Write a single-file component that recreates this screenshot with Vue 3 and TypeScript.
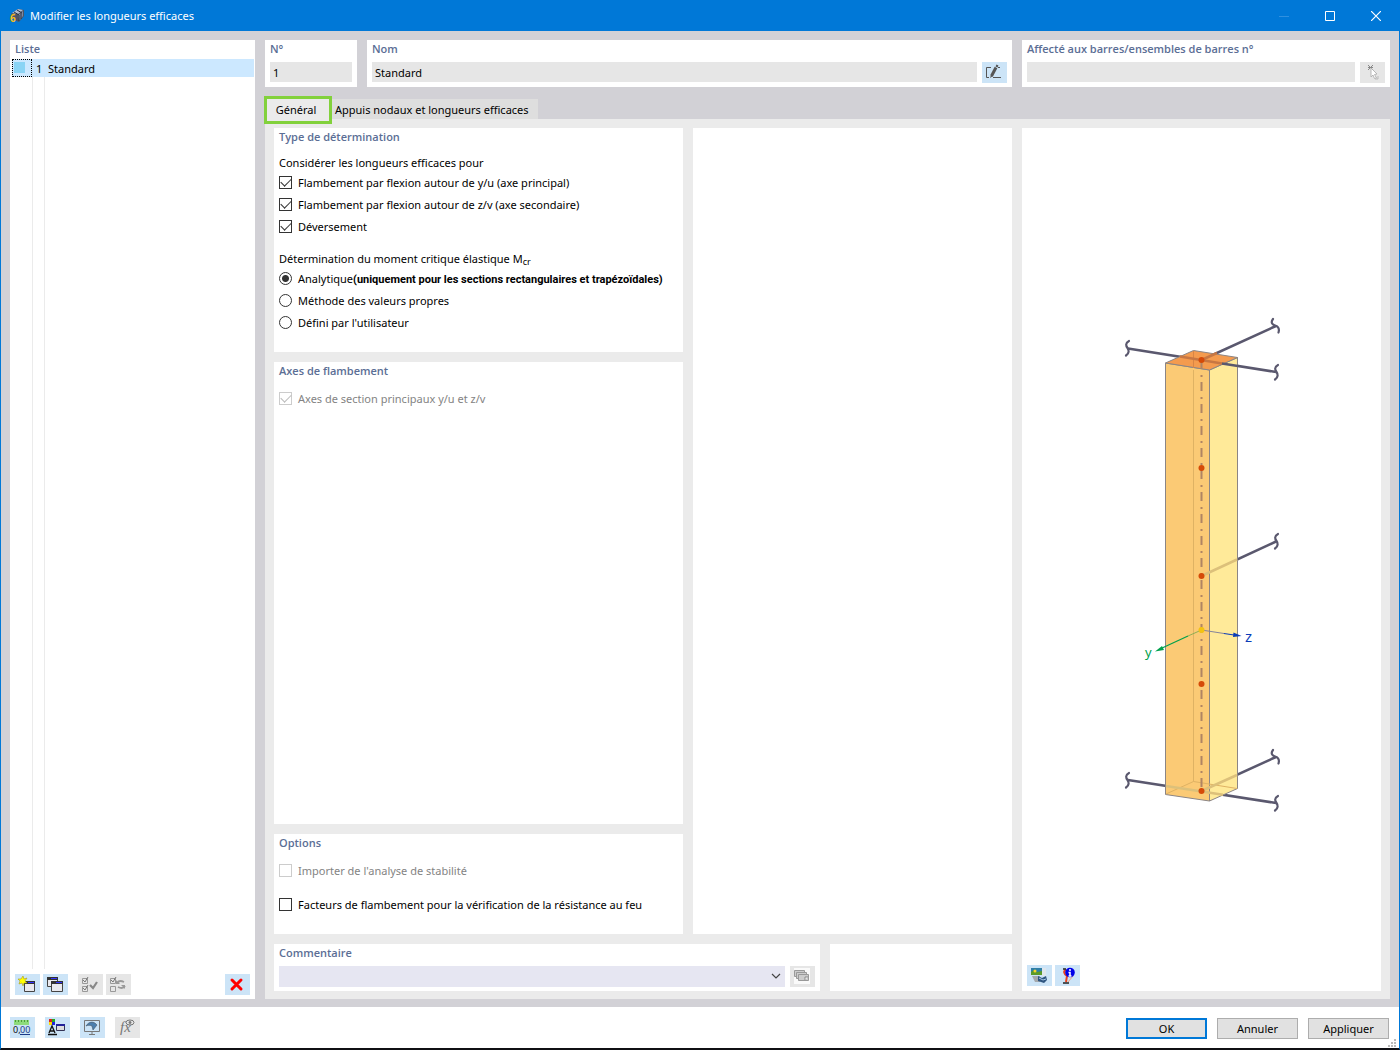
<script setup lang="ts">
import { ref } from 'vue'

interface Option {
  id: string
  label: string
  note?: string
}

const buckling: Option[] = [
  { id: 'yu', label: 'Flambement par flexion autour de y/u (axe principal)' },
  { id: 'zv', label: 'Flambement par flexion autour de z/v (axe secondaire)' },
  { id: 'lt', label: 'Déversement' },
]
const methods: Option[] = [
  { id: 'analytic', label: 'Analytique', note: '(uniquement pour les sections rectangulaires et trapézoïdales)' },
  { id: 'eigen', label: 'Méthode des valeurs propres' },
  { id: 'user', label: "Défini par l'utilisateur" },
]

const selectedBuckling = ref<string[]>(['yu', 'zv', 'lt'])
const method = ref('analytic')
const fire = ref(false)
const name = ref('Standard')
const nodes: number[] = [360, 468, 576, 684, 791]
</script>

<template>
  <div class="window">
    <header class="titlebar">
      <svg class="app-icon" width="16" height="20" viewBox="0 0 16 20" aria-hidden="true">
        <g transform="translate(0 2)">
          <path d="M2 6 9 1l6 1v6l-5 6-5-2z" fill="#4c5563" />
          <path d="M3 5l6-4 5 1-5 4z" fill="#aebbd0" />
          <path d="M9 7l5-4v5l-4 5z" fill="#7d8aa5" />
          <path d="M5 4l5 3M8 2l5 3M10 7v6M12 5v6" stroke="#2b3140" fill="none" />
        </g>
        <text x="1" y="16" font-size="10" font-weight="700" fill="#f5bd1c">6</text>
      </svg>
      <h1>Modifier les longueurs efficaces</h1>
      <div class="win-buttons">
        <button type="button" aria-label="Réduire" disabled>
          <svg width="10" height="10"><path d="M0 5.500h10" stroke="#2f90e0" /></svg>
        </button>
        <button type="button" aria-label="Agrandir">
          <svg width="10" height="10"><path d="M.5.500h9v9h-9z" stroke="#fff" fill="none" /></svg>
        </button>
        <button type="button" aria-label="Fermer">
          <svg width="10" height="10"><path d="M0 0l10 10M10 0L0 10" stroke="#fff" stroke-width="1.200" /></svg>
        </button>
      </div>
    </header>

    <div class="workspace">
      <aside class="card list">
        <h2>Liste</h2>
        <ul class="rows">
          <li class="row">
            <span class="swatch-cell"><span class="swatch"></span></span>
            <span class="row-no">1</span>
            <span class="row-name">Standard</span>
          </li>
        </ul>
        <div class="tools list-tools">
          <button class="tool" type="button" aria-label="Nouveau">
            <svg width="17" height="17" viewBox="0 0 17 17">
              <path d="M6.500 6.500h10v9h-10z" fill="#e9e9ee" stroke="#444" /><path d="M6 5h11v3H6z" fill="#333" /><path d="M10 6h6v1h-6z" fill="#33f" />
              <path d="M5 0l1 3 3-1-2 3 2 2-3 0-1 3-1-3-3 1 1-3-2-2 3 0z" fill="#ff0" stroke="#a89b20" stroke-width=".6" />
            </svg>
          </button>
          <button class="tool" type="button" aria-label="Copier">
            <svg width="17" height="17" viewBox="0 0 17 17">
              <path d="M1.500 1.500h10v9h-10z" fill="#e9e9ee" stroke="#444" /><path d="M1 1h11v3H1z" fill="#333" /><path d="M5 2h6v1H5z" fill="#33f" />
              <path d="M5.500 6.500h11v9h-11z" fill="#e9e9ee" stroke="#444" /><path d="M5 5h12v3H5z" fill="#333" /><path d="M10 6h6v1h-6z" fill="#33f" />
            </svg>
          </button>
          <button class="tool off spaced" type="button" aria-label="Tout sélectionner" disabled>
            <svg width="17" height="17" viewBox="0 0 17 17" fill="none" stroke="#999">
              <path d="M1.500 2.500h5v5h-5zM1.500 10.500h5v5h-5z" /><path d="M2 4l2 2 3-5M2 12l2 2 3-5" stroke="#777" /><path d="M9 9l3 3 4-6" stroke-width="2.200" stroke="#888" />
            </svg>
          </button>
          <button class="tool off" type="button" aria-label="Inverser la sélection" disabled>
            <svg width="17" height="17" viewBox="0 0 17 17" fill="none" stroke="#999">
              <path d="M1.500 2.500h5v5h-5zM1.500 10.500h5v5h-5z" /><path d="M2 4l2 2 3-5" stroke="#777" /><path d="M8 7c2-3 5-2 7-1M16 10c-2 3-5 2-7 1" stroke-width="1.800" /><path d="M7 4v4h4zM16 13V9h-4z" fill="#999" stroke="none" />
            </svg>
          </button>
          <button class="tool push" type="button" aria-label="Supprimer">
            <svg width="17" height="17" viewBox="0 0 17 17"><path d="M4 4l9 9M13 4l-9 9" stroke="#f00" stroke-width="3" stroke-linecap="round" /></svg>
          </button>
        </div>
      </aside>

      <main class="main">
        <div class="head">
          <section class="card field">
            <label for="no">N°</label>
            <div class="field-row"><input id="no" class="text" type="text" value="1" readonly /></div>
          </section>
          <section class="card field">
            <label for="name">Nom</label>
            <div class="field-row">
              <input id="name" v-model="name" class="text" type="text" />
              <button class="tool" type="button" aria-label="Modifier le nom">
                <svg width="17" height="17" viewBox="0 0 17 17" fill="none">
                  <path d="M6 3.500H1.500v10H4M13 3.500h2M8 13.500h8" stroke="#555" /><path d="M6.500 12l4.500-8.500" stroke="#555" stroke-width="3" /><path d="M5 14l1-3 2 1z" fill="#555" /><path d="M11 1.500l2 1" stroke="#555" stroke-width="2" />
                </svg>
              </button>
            </div>
          </section>
          <section class="card field">
            <label for="members">Affecté aux barres/ensembles de barres n°</label>
            <div class="field-row">
              <input id="members" class="text" type="text" readonly />
              <button class="tool off" type="button" aria-label="Sélectionner" disabled>
                <svg width="17" height="17" viewBox="0 0 17 17"><path d="M5 1l5 5M10 1L5 6M5 3.500h5" stroke="#888" /><path d="M8 4l6 6-2.500.5 2 3.500-2 .5-1.500-3.500L8 13z" fill="#fff" stroke="#aaa" stroke-width=".8" /><path d="M12 15h3v-3" stroke="#bbb" fill="none" /></svg>
              </button>
            </div>
          </section>
        </div>

        <div class="tabs" role="tablist">
          <button class="tab active" type="button" role="tab" aria-selected="true">Général</button>
          <button class="tab" type="button" role="tab" aria-selected="false">Appuis nodaux et longueurs efficaces</button>
        </div>

        <div class="pane">
          <div class="left">
            <div class="upper">
              <div class="stack">
                <section class="card type">
                  <h2>Type de détermination</h2>
                  <p class="lead">Considérer les longueurs efficaces pour</p>
                  <label v-for="o in buckling" :key="o.id" class="opt">
                    <input v-model="selectedBuckling" type="checkbox" :value="o.id" />
                    <span>{{ o.label }}</span>
                  </label>
                  <p class="lead second">Détermination du moment critique élastique M<span class="sub">cr</span></p>
                  <label v-for="o in methods" :key="o.id" class="opt">
                    <input v-model="method" type="radio" name="method" :value="o.id" />
                    <span>{{ o.label }}<b v-if="o.note">{{ o.note }}</b></span>
                  </label>
                </section>
                <section class="card axes">
                  <h2>Axes de flambement</h2>
                  <label class="opt first disabled"><input type="checkbox" checked disabled /><span>Axes de section principaux y/u et z/v</span></label>
                </section>
                <section class="card options">
                  <h2>Options</h2>
                  <label class="opt first disabled"><input type="checkbox" disabled /><span>Importer de l'analyse de stabilité</span></label>
                  <label class="opt apart"><input v-model="fire" type="checkbox" /><span>Facteurs de flambement pour la vérification de la résistance au feu</span></label>
                </section>
              </div>
              <section class="card"></section>
            </div>
            <div class="lower">
              <section class="card field">
                <label for="comment">Commentaire</label>
                <div class="field-row">
                  <div class="combo">
                    <select id="comment"><option value=""></option></select>
                    <svg class="chevron" width="10" height="6" viewBox="0 0 10 6"><path d="M1 1l4 4 4-4" fill="none" stroke="#444" stroke-width="1.200" /></svg>
                  </div>
                  <button class="tool off" type="button" aria-label="Commentaires enregistrés" disabled>
                    <svg width="17" height="17" viewBox="0 0 17 17"><path d="M1 0h16v16H1z" fill="#fafafa" /><g fill="#ccc" stroke="#999"><path d="M1.500 2.500h10v6h-10z" /><path d="M3.500 4.500h10v6h-10z" /><path d="M5.500 6.500h10v6h-10z" /></g><path d="M12 12V9h3" stroke="#888" fill="#fff" /></svg>
                  </button>
                </div>
              </section>
              <section class="card"></section>
            </div>
          </div>

          <section class="card preview">
            <div class="scene">
              <svg width="159" height="543" viewBox="1122 275 159 543" role="img" aria-label="Barre avec axes y et z">
                <g stroke="#5a586e" stroke-width="2.500" fill="none">
                  <path d="M1128 348.500L1276 372M1201.500 360L1276 326M1201.500 576L1276 541.500M1128 780L1276 803M1201.500 791L1276 757" />
                  <g stroke-width="2.200" stroke-linecap="round">
                    <path d="M1129 341c-4 2-3 5-1.500 7s2 5-1.500 7.500" />
                    <path d="M1278 365c-4 2-3 5-1.500 7s2 5-1.500 7.500" />
                    <path d="M1278 534c-4 2-3 5-1.500 7s2 5-1.500 7.500" />
                    <path d="M1273 319c-3 4 0 6 2 6.500s5 2 3.500 7" />
                    <path d="M1129 773c-4 2-3 5-1.500 7s2 5-1.500 7.500" />
                    <path d="M1278 796c-4 2-3 5-1.500 7s2 5-1.500 7.500" />
                    <path d="M1273 750c-3 4 0 6 2 6.500s5 2 3.500 7" />
                  </g>
                </g>
                <g stroke="#8b8585" stroke-linejoin="round">
                  <path d="M1165.500 363L1209.500 370V801L1165.500 794.500z" fill="#fbca75" />
                  <path d="M1209.500 370L1237.500 357.500V788.500L1209.500 801z" fill="#ffea99" />
                  <path d="M1165.500 363L1193.500 350.500L1237.500 357.500L1209.500 370z" fill="#f49b4e" />
                </g>
                <g fill="none" stroke="#dfb263">
                  <path d="M1193.500 370V781.500L1166 794M1193.500 781.500L1237 788.500" />
                  <path d="M1193.500 351V368" stroke="#d98545" />
                  <path d="M1201.500 576L1237 559.500M1201.500 791L1237 775M1166 786L1223 794.800" stroke="#dcc07a" stroke-width="2.500" />
                  <path d="M1180 356.600L1222 363.400M1201.500 360L1217 353" stroke="#c77743" stroke-width="2.500" />
                  <path d="M1222 363.400L1238 366" stroke="#5a586e" stroke-width="2.500" />
                  <path d="M1201.500 360V791" stroke="#b08463" stroke-width="2" stroke-dasharray="9 6 2 5" />
                </g>
                <circle v-for="y in nodes" :key="y" cx="1201.500" :cy="y" r="3" fill="#d54a08" />
                <path d="M1201.500 630L1188 636" stroke="#8fae54" /><path d="M1188 636L1161 648.500" stroke="#00a04c" stroke-width="1.200" />
                <path d="M1155 651.500l7-5.500 2 4z" fill="#00a04c" />
                <path d="M1201.500 630L1224 633.500" stroke="#85849b" /><path d="M1224 633.500L1234 635" stroke="#0a3cb8" stroke-width="1.200" />
                <path d="M1241.500 636l-8-3.500-.5 4.500z" fill="#0a3cb8" />
                <circle cx="1201.500" cy="630" r="3" fill="#f3c312" />
                <text x="1145" y="657" font-size="13" fill="#00a04c">y</text>
                <text x="1245" y="642" font-size="15" fill="#0a3cb8">z</text>
              </svg>
            </div>
            <div class="tools">
              <button class="tool" type="button" aria-label="Enregistrer l'image">
                <svg width="17" height="17" viewBox="0 0 17 17"><path d="M1 1h11v7H1z" fill="#2f7fa8" /><path d="M1 5l3-2 3 2 5-1v4H1z" fill="#5a9a28" /><circle cx="5" cy="4" r="1.500" fill="#f7d42c" /><path d="M12 1h4v8h-4z" fill="#dfe6ec" /><path d="M2 9h8v6H5z" fill="#a4a8ac" /><path d="M8 9l4 2 4-2 1 4-3 3-6-2z" fill="#2e5580" /><path d="M9 11l4 2 3-1" stroke="#a9c8ea" fill="none" /></svg>
              </button>
              <button class="tool" type="button" aria-label="Informations">
                <svg width="17" height="17" viewBox="0 0 17 17"><path d="M8 3c-3 1-2 4 1 6l-1 6" stroke="#e8401c" stroke-width="2" fill="none" /><path d="M15 9l-5 6" stroke="#e8a080" /><path d="M5 16h6M5 2h3" stroke="#222" stroke-width="1.500" /><circle cx="12" cy="5.500" r="4.800" fill="#0000e8" /><path d="M12 2v2M10.500 5.500H12V9M10.500 9h3" stroke="#fff" stroke-width="1.500" fill="none" /></svg>
              </button>
            </div>
          </section>
        </div>
      </main>
    </div>

    <footer class="footer">
      <div class="footer-tools">
        <button class="tool" type="button" aria-label="Unités">
          <svg width="19" height="17" viewBox="0 0 19 17"><path d="M2 1h15v5H2z" fill="#8edb7c" /><path d="M3.500 1v2M6.500 1v2M9.500 1v2M12.500 1v2M15.500 1v2" stroke="#4a9a3a" /><text x="1" y="14" font-size="9" fill="#111">0,</text><text x="8" y="14" font-size="9" fill="#1c3a88">00</text><path d="M8 15.500h10" stroke="#1c3a88" /></svg>
        </button>
        <button class="tool" type="button" aria-label="Affichage">
          <svg width="17" height="17" viewBox="0 0 17 17"><path d="M1 0h3v3H1z" fill="#d22" /><path d="M4 0h3v3H4z" fill="#2a2" /><path d="M1 3h3v3H1z" fill="#fd0" /><path d="M4 3h3v3H4z" fill="#22d" /><path d="M1 14l3-7 3 7M2 12h4M0 15.500h9" stroke="#111" stroke-width="1.300" fill="none" /><path d="M8.500 5.500h8v6h-8z" fill="#ddd" stroke="#335" /><path d="M8 5h9v2H8z" fill="#229" /></svg>
        </button>
        <button class="tool" type="button" aria-label="Vue">
          <svg width="17" height="17" viewBox="0 0 17 17"><path d="M1.500 1.500h15v11h-15zM9 13v2M6 15.500h6" stroke="#777" fill="none" /><path d="M3 7c3-5 8-5 11-1l-4 5-1-4c-2-1-4-1-6 0z" fill="#4c7fae" stroke="#456" stroke-width=".6" /></svg>
        </button>
        <button class="tool off" type="button" aria-label="Formule" disabled>
          <svg width="17" height="17" viewBox="0 0 17 17" fill="none" stroke="#777"><text class="fx" x="2" y="13" font-size="15" fill="#777" stroke="none">fx</text><ellipse cx="12" cy="3.500" rx="4" ry="2.500" /><circle cx="12" cy="3.500" r="1" fill="#777" /></svg>
        </button>
      </div>
      <div class="actions">
        <button class="action primary" type="button">OK</button>
        <button class="action" type="button">Annuler</button>
        <button class="action" type="button">Appliquer</button>
      </div>
      <svg class="grip" width="8" height="8" fill="#bbb" aria-hidden="true"><path d="M6 0h2v2H6zM3 3h2v2H3zM6 3h2v2H6zM0 6h2v2H0zM3 6h2v2H3zM6 6h2v2H6z" /></svg>
    </footer>
  </div>
</template>

<style>
body {
  margin: 0;
}
</style>

<style scoped>
.window,
.window * {
  box-sizing: border-box;
}
.window {
  display: flex;
  flex-direction: column;
  min-height: 100vh;
  border: 1px solid #0078d7;
  border-top: 0;
  border-bottom: 2px solid #101014;
  background: #fff;
  color: #000;
  font-family: "Noto Sans", "Open Sans", sans-serif;
  font-size: 11px;
  line-height: 16px;
}
button,
input,
select {
  font: inherit;
  color: inherit;
  margin: 0;
  padding: 0;
  border: 0;
  border-radius: 0;
}
h1,
h2,
p,
ul {
  margin: 0;
  padding: 0;
}
.titlebar {
  display: flex;
  align-items: center;
  height: 31px;
  padding-left: 8px;
  background: #0078d7;
  color: #fff;
}
.titlebar h1 {
  flex: 1;
  padding-left: 5px;
  font-size: 11px;
  font-weight: 400;
}
.win-buttons {
  display: flex;
}
.win-buttons button {
  display: flex;
  align-items: center;
  justify-content: center;
  width: 46px;
  height: 31px;
  background: none;
}
.workspace {
  display: flex;
  flex: 1;
  gap: 10px;
  padding: 9px 9px 8px;
  background: #d2d1d6;
}
.card {
  min-width: 0;
  background: #fff;
}
h2,
.field label {
  display: block;
  height: 19px;
  padding-left: 5px;
  color: #5b6e95;
  font-family: "Open Sans", "Noto Sans", sans-serif;
  font-size: 11px;
  font-weight: 600;
  line-height: 18px;
}
.list {
  display: flex;
  flex-direction: column;
  width: 245px;
}
.rows {
  flex: 1;
  margin: 0 1px 5px 2px;
  list-style: none;
  background:
    linear-gradient(#ebebeb, #ebebeb) 20px 0 / 1px 100% no-repeat,
    linear-gradient(#ebebeb, #ebebeb) 32px 0 / 1px 100% no-repeat;
}
.row {
  display: flex;
  height: 18px;
  line-height: 19px;
  background: #cce8ff;
}
.swatch-cell {
  width: 20px;
  padding: 2px 1px;
  border: 1px dotted #000;
}
.swatch {
  display: block;
  width: 11px;
  height: 11px;
  background: #8ad4f5;
}
.row-no {
  width: 16px;
  padding-left: 4px;
}
.tools {
  display: flex;
  gap: 3px;
  padding: 0 5px 5px;
}
.list-tools {
  padding-bottom: 4px;
}
.tool {
  display: flex;
  align-items: flex-start;
  justify-content: center;
  flex: none;
  width: 25px;
  height: 21px;
  padding: 2px 2px 0 0;
  background: #cce4f7;
}
.tool.off {
  background: #e6e6e6;
}
.spaced {
  margin-left: 7px;
}
.push {
  margin-left: auto;
}
.main {
  display: flex;
  flex-direction: column;
  flex: 1;
  min-width: 0;
}
.head {
  display: grid;
  grid-template-columns: 92px 1fr 368px;
  gap: 10px;
}
.field {
  height: 47px;
}
.field-row {
  display: flex;
  gap: 5px;
  padding: 3px 5px 0;
}
.text {
  flex: 1;
  min-width: 0;
  height: 20px;
  padding: 1px 3px 0;
  background: #e6e6e6;
}
.tabs {
  display: flex;
  align-items: flex-end;
  height: 32px;
}
.tab {
  height: 20px;
  padding: 1px 9px 0 3px;
  background: #dedede;
  line-height: 19px;
}
.tab.active {
  position: relative;
  height: 28px;
  width: 68px;
  margin: 0 0 -5px -1px;
  padding: 0 4px 2px 0;
  border: 3px solid #82d13c;
  background: #ebebeb;
}
.pane {
  display: grid;
  grid-template-columns: 1fr 359px;
  flex: 1;
  gap: 10px;
  padding: 9px 9px 8px;
  background: #ebebeb;
}
.left,
.stack {
  display: flex;
  flex-direction: column;
  gap: 10px;
  min-width: 0;
}
.upper {
  display: grid;
  grid-template-columns: minmax(0, 409fr) minmax(0, 319fr);
  flex: 1;
  gap: 10px;
}
.lower {
  display: grid;
  grid-template-columns: 3fr 1fr;
  gap: 10px;
}
.type {
  padding-bottom: 18px;
}
.axes {
  flex: 1;
}
.options {
  height: 100px;
}
.lead {
  height: 16px;
  margin: 8px 5px 1px;
}
.lead.second {
  margin-top: 13px;
}
.sub {
  position: relative;
  top: 2px;
  font-size: 9px;
  line-height: 9px;
}
.opt {
  display: flex;
  align-items: flex-start;
  gap: 6px;
  height: 22px;
  padding: 3px 0 0 5px;
  white-space: nowrap;
}
.opt b {
  font-family: Roboto, "Open Sans", sans-serif;
  font-weight: 700;
}
.opt.first {
  margin-top: 7px;
}
.opt.apart {
  margin-top: 12px;
}
.opt.disabled {
  color: #838383;
}
.opt input {
  appearance: none;
  flex: none;
  width: 13px;
  height: 13px;
  margin-top: 1px;
  border: 1px solid #333;
  background: #fff;
}
.opt input[type="radio"] {
  border-radius: 50%;
}
.opt input[type="radio"]:checked {
  background: radial-gradient(circle, #333 3px, #fff 4px);
}
.opt input[type="checkbox"]:checked::before {
  content: "";
  display: block;
  width: 9px;
  height: 5px;
  margin: 1px 0 0 1px;
  border: solid #333;
  border-width: 0 0 1px 1px;
  transform: rotate(-45deg);
}
.opt.disabled input {
  border-color: #ccc;
}
.opt.disabled input:checked::before {
  border-color: #bbb;
}
.combo {
  position: relative;
  flex: 1;
}
.combo select {
  display: block;
  appearance: none;
  width: 100%;
  height: 21px;
  background: #e6e6f2;
}
.chevron {
  position: absolute;
  top: 7px;
  right: 4px;
  pointer-events: none;
}
.preview {
  display: flex;
  flex-direction: column;
}
.scene {
  display: flex;
  align-items: center;
  justify-content: center;
  flex: 1;
}
.footer {
  display: flex;
  align-items: center;
  justify-content: space-between;
  position: relative;
  height: 41px;
  padding: 0 10px 0 9px;
}
.footer-tools,
.actions {
  display: flex;
  gap: 10px;
}
.actions {
  padding-top: 2px;
}
.fx {
  font-family: "Liberation Serif", serif;
  font-style: italic;
}
.action {
  width: 81px;
  height: 21px;
  border: 1px solid #adadad;
  background: #e1e1e1;
  line-height: 19px;
}
.action.primary {
  border: 2px solid #0078d7;
  line-height: 17px;
}
.grip {
  position: absolute;
  right: 3px;
  bottom: 1px;
}
</style>
